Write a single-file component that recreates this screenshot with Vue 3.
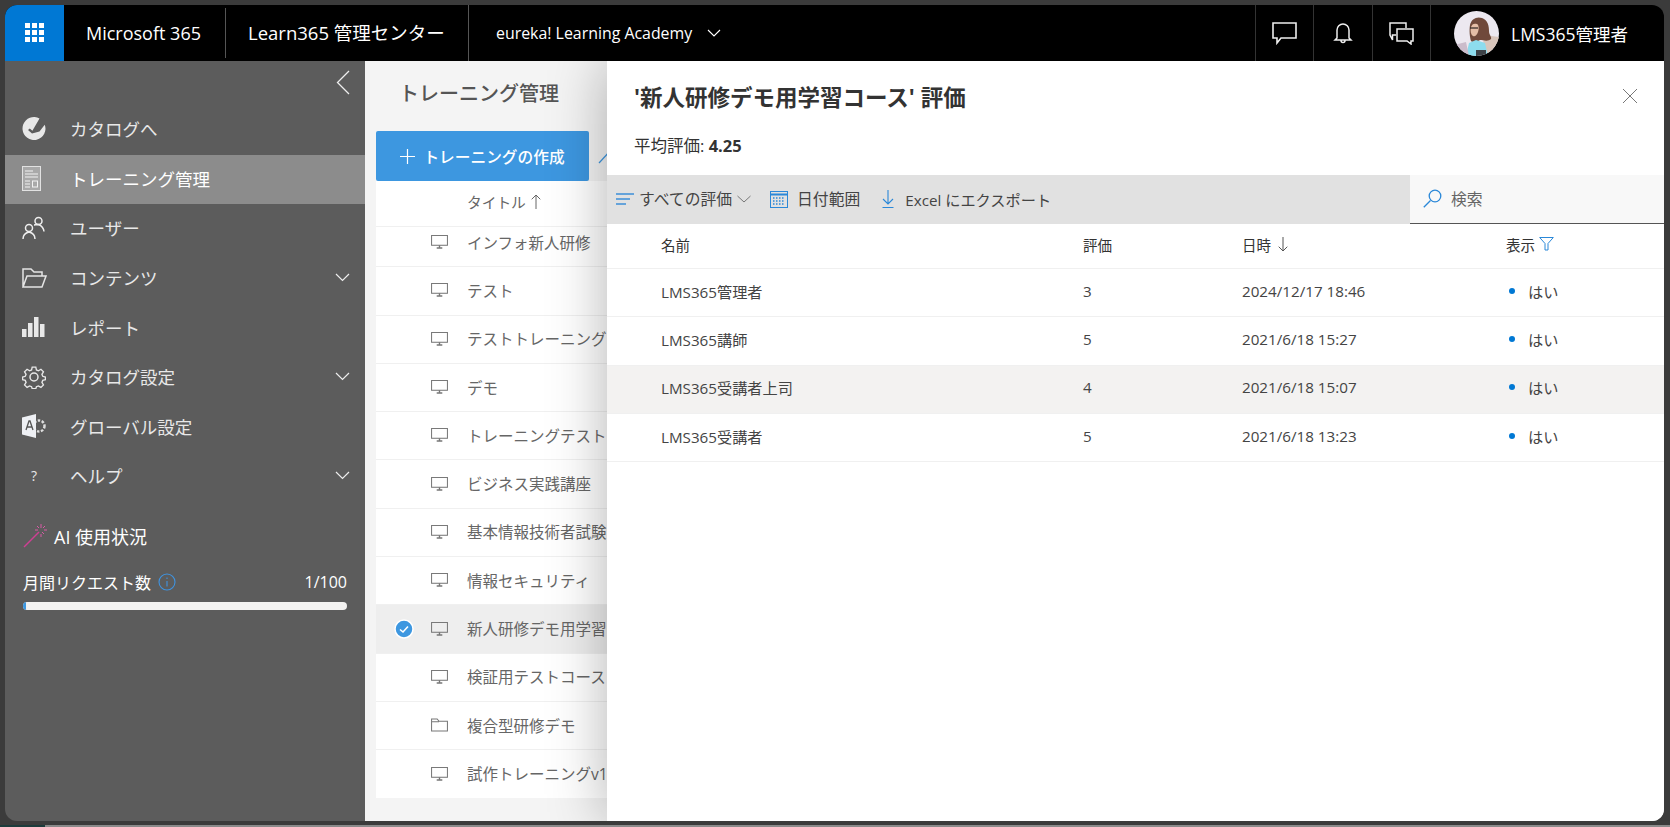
<script setup>
const navItems = [
  { label: 'カタログへ', icon: 'catalog' },
  { label: 'トレーニング管理', icon: 'training', active: true },
  { label: 'ユーザー', icon: 'users' },
  { label: 'コンテンツ', icon: 'folder', more: true },
  { label: 'レポート', icon: 'report' },
  { label: 'カタログ設定', icon: 'gear', more: true },
  { label: 'グローバル設定', icon: 'global' },
  { label: 'ヘルプ', icon: 'help', more: true }
]

const courses = [
  { title: 'インフォ新人研修' },
  { title: 'テスト' },
  { title: 'テストトレーニング' },
  { title: 'デモ' },
  { title: 'トレーニングテスト' },
  { title: 'ビジネス実践講座' },
  { title: '基本情報技術者試験' },
  { title: '情報セキュリティ' },
  { title: '新人研修デモ用学習コース', selected: true },
  { title: '検証用テストコース' },
  { title: '複合型研修デモ', folder: true },
  { title: '試作トレーニングv1' }
]

const ratings = [
  { name: 'LMS365管理者', score: 3, date: '2024/12/17 18:46' },
  { name: 'LMS365講師', score: 5, date: '2021/6/18 15:27' },
  { name: 'LMS365受講者上司', score: 4, date: '2021/6/18 15:07', hover: true },
  { name: 'LMS365受講者', score: 5, date: '2021/6/18 13:23' }
]
</script>

<template>
  <div class="screen">
    <div class="window">
      <header class="topbar">
        <div class="waffle">
          <svg width="20" height="20" viewBox="0 0 20 20" fill="#fff">
            <rect x="0" y="0" width="5" height="5" /><rect x="7" y="0" width="5" height="5" /><rect x="14" y="0" width="5" height="5" />
            <rect x="0" y="7" width="5" height="5" /><rect x="7" y="7" width="5" height="5" /><rect x="14" y="7" width="5" height="5" />
            <rect x="0" y="14" width="5" height="5" /><rect x="7" y="14" width="5" height="5" /><rect x="14" y="14" width="5" height="5" />
          </svg>
        </div>
        <div class="brand">Microsoft 365</div>
        <div class="appname">Learn365 管理センター</div>
        <div class="tenant">
          eureka! Learning Academy
          <svg width="14" height="8" viewBox="0 0 14 8" fill="none" stroke="#fff" stroke-width="1.1"><path d="M1 1l6 6 6-6" /></svg>
        </div>
        <div class="top-actions">
          <div class="top-btn">
            <svg width="25" height="24" viewBox="0 0 25 24" fill="none" stroke="#eee" stroke-width="1.6"><path d="M1 2h23v15H9l-4 5v-5H1z" /></svg>
          </div>
          <div class="top-btn">
            <svg width="20" height="24" viewBox="0 0 20 24" fill="none" stroke="#eee" stroke-width="1.5"><path d="M4 17V9a6 6 0 0112 0v8l2 2H2zM8 19.500a2 2 0 004 0" /></svg>
          </div>
          <div class="top-btn">
            <svg width="25" height="24" viewBox="0 0 25 24" fill="none" stroke="#eee" stroke-width="1.5"><path d="M7 14H3.500v5L1 14V2h16v5M8 8h16v12h-2v3l-4-3H8z" /></svg>
          </div>
          <div class="user">
            <svg class="avatar" width="45" height="45" viewBox="0 0 45 45">
              <defs>
                <clipPath id="avatarClip"><circle cx="22.500" cy="22.500" r="22.500" /></clipPath>
                <filter id="avatarBlur"><feGaussianBlur stdDeviation="0.7" /></filter>
              </defs>
              <g clip-path="url(#avatarClip)">
                <rect width="45" height="45" fill="#ece8f0" />
                <g filter="url(#avatarBlur)">
                  <path d="M30 24l15 2v19H28z" fill="#d9c6bc" />
                  <path d="M16 14c1-6 7-9 12-7 6 2 7 8 7 13 0 4 3 6 2 8-3 3-8 1-11 1-3 2-7 3-9 1-1-3-2-10-1-16z" fill="#6f4a3a" />
                  <path d="M17 16c1-3 3-4 6-3 2 1 2 5 1 8-1 3-3 5-5 4-2-1-3-5-2-9z" fill="#e4bda6" />
                  <path d="M16 17h8" stroke="#2c2320" stroke-width="1.200" />
                  <path d="M12 45l3-13 7-3 9 3 3 13z" fill="#8ddcee" />
                  <path d="M0 34l12-3 3 14H0z" fill="#cbbccb" />
                  <path d="M22 39h10v6H22z" fill="#3d4247" />
                </g>
              </g>
            </svg>
            <span>LMS365管理者</span>
          </div>
        </div>
      </header>

      <div class="body">
        <aside class="sidebar">
          <div class="collapse">
            <svg width="14" height="25" viewBox="0 0 14 25" fill="none" stroke="#eee" stroke-width="1.3"><path d="M13 1L1.500 12.500 13 24" /></svg>
          </div>
          <nav>
            <div v-for="item in navItems" :key="item.label" class="nav-item" :class="{ active: item.active }">
              <span class="nav-icon">
                <svg v-if="item.icon === 'catalog'" width="24" height="24" viewBox="0 0 24 24">
                  <path d="M17.500 1.400A11.500 11.500 0 1023.500 12c0-1.500-.3-3-.8-4.300L17.500 14.500 10 16.500l-4-3.500 1.800-1.500 2.600 2.200z" fill="#e8e8e8" />
                </svg>
                <svg v-else-if="item.icon === 'training'" width="19" height="25" viewBox="0 0 19 25" fill="none">
                  <rect x=".5" y=".5" width="18" height="24" fill="#a9a9a9" stroke="#e2e2e2" />
                  <path d="M3 5h8M3 8h13M3 11h13M3 15h5M3 18h5M3 21h5" stroke="#f2f2f2" />
                  <rect x="10.500" y="15" width="5" height="6" stroke="#f2f2f2" />
                </svg>
                <svg v-else-if="item.icon === 'users'" width="24" height="24" viewBox="0 0 24 24" fill="none" stroke="#eee" stroke-width="1.500">
                  <circle cx="16.500" cy="5" r="3.500" /><circle cx="7" cy="12" r="3.500" />
                  <path d="M1 23c0-3 2-6 6-7 4 1 6 4 6 7M12 9c1 0 2-.5 4.500-.5 2.500 1 5 3 5.500 7" />
                </svg>
                <svg v-else-if="item.icon === 'folder'" width="25" height="22" viewBox="0 0 25 22" fill="none" stroke="#e4e4e4" stroke-width="1.500">
                  <path d="M1 20V2h8l3 3h8v4M1 20l4-11h19l-4 11z" />
                </svg>
                <svg v-else-if="item.icon === 'report'" width="23" height="20" viewBox="0 0 23 20" fill="#e8e8e8">
                  <rect x="0" y="12" width="4.500" height="8" /><rect x="6" y="6" width="4.500" height="14" />
                  <rect x="12" y="0" width="4.500" height="20" /><rect x="18" y="7" width="4.500" height="13" />
                </svg>
                <svg v-else-if="item.icon === 'gear'" width="24" height="24" viewBox="0 0 24 24" fill="none" stroke="#e8e8e8" stroke-width="1.500">
                  <circle cx="12" cy="12" r="4" />
                  <path d="M10 1h4l.7 3.200 2.200.9L19.700 3.400l2.800 2.800-1.700 2.800.9 2.200 3 .8v3l-3 .8-.9 2.200 1.700 2.800-2.800 2.800-2.800-1.700-2.200.9-.7 2.200h-4l-.7-2.200-2.200-.9-2.800 1.700-2.800-2.800 1.700-2.800-.9-2.200-3-.8v-3l3-.8.900-2.200-1.700-2.800 2.800-2.800 2.800 1.700 2.200-.9z" transform="translate(1.200 1.200) scale(.9)" />
                </svg>
                <svg v-else-if="item.icon === 'global'" width="24" height="24" viewBox="0 0 24 24">
                  <circle cx="17" cy="12" r="5.500" fill="none" stroke="#ddd" stroke-width="2.500" stroke-dasharray="2.500 1.500" />
                  <path d="M0 3.500L14 0v24L0 20.500z" fill="#eef0f4" />
                  <path d="M4 16l3-9h1l3 9M5 13h5" fill="none" stroke="#555" stroke-width="1.300" />
                </svg>
                <span v-else class="help-mark">?</span>
              </span>
              <span class="nav-label">{{ item.label }}</span>
              <svg v-if="item.more" class="nav-more" width="15" height="9" viewBox="0 0 15 9" fill="none" stroke="#eee" stroke-width="1.200"><path d="M1 1l6.500 6.500L14 1" /></svg>
            </div>
          </nav>
          <div class="usage">
            <div class="usage-title">
              <svg width="25" height="25" viewBox="0 0 25 25" fill="none">
                <path d="M1 24L16 9" stroke="#cf3f93" stroke-width="1.500" />
                <path d="M18 1v4M18 11v3M12 7h3M21 7h3M14 3l2 2M22 3l-2 2M21 11l-2-2" stroke="#d85aa5" stroke-width="1" />
              </svg>
              <span>AI 使用状況</span>
            </div>
            <div class="usage-row">
              <span>月間リクエスト数</span>
              <svg width="18" height="18" viewBox="0 0 18 18" fill="none" stroke="#3f93e0" stroke-width="1.100">
                <circle cx="9" cy="9" r="8" /><path d="M9 8v5.500M9 4.500v1.500" />
              </svg>
              <span class="usage-count">1/100</span>
            </div>
            <div class="usage-bar"><div class="usage-fill" :style="{ width: '1%' }"></div></div>
          </div>
        </aside>

        <main class="content">
          <h1 class="page-title">トレーニング管理</h1>
          <div class="commands">
            <button class="create-btn">
              <svg width="15" height="15" viewBox="0 0 15 15" stroke="#fff" stroke-width="1.200"><path d="M7.500 0v15M0 7.500h15" /></svg>
              トレーニングの作成
            </button>
            <svg class="edit-icon" width="16" height="16" viewBox="0 0 16 16" fill="none" stroke="#3d97e0" stroke-width="1.200"><path d="M1 15L13 2" /></svg>
          </div>
          <div class="list">
            <div class="list-head">
              タイトル
              <svg width="10" height="15" viewBox="0 0 10 15" fill="none" stroke="#666"><path d="M5 15V1M.7 5.300L5 1l4.300 4.300" /></svg>
            </div>
            <div class="list-rows">
              <div v-for="c in courses" :key="c.title" class="list-row" :class="{ selected: c.selected }">
                <span class="check">
                  <svg v-if="c.selected" width="20" height="20" viewBox="0 0 20 20">
                    <circle cx="10" cy="10" r="9" fill="#3d97e0" stroke="#fff" stroke-width="1.500" />
                    <path d="M6 10.500l3 2.500 5-5.500" fill="none" stroke="#fff" stroke-width="1.600" />
                  </svg>
                </span>
                <svg v-if="c.folder" class="row-icon" width="17" height="14" viewBox="0 0 18 15" fill="none" stroke="#777" stroke-width="1.100">
                  <path d="M.5 14V1h6l2 2.500h9V14zM.5 4h8" />
                </svg>
                <svg v-else class="row-icon" width="17" height="14" viewBox="0 0 18 15" fill="none" stroke="#777" stroke-width="1.100">
                  <rect x=".5" y=".5" width="17" height="10.500" /><path d="M9 11v2.500M6 14h6" stroke-width="1.500" />
                </svg>
                <span class="row-title">{{ c.title }}</span>
              </div>
            </div>
          </div>

          <section class="panel">
            <div class="panel-head">
              <h2>'新人研修デモ用学習コース' 評価</h2>
              <svg width="14" height="14" viewBox="0 0 14 14" stroke="#777" stroke-width="1"><path d="M0 0l14 14M14 0L0 14" /></svg>
            </div>
            <p class="average">平均評価: <strong>4.25</strong></p>
            <div class="toolbar">
              <div class="tools">
                <div class="tool first">
                  <svg width="18" height="12" viewBox="0 0 18 12" stroke="#3d8fd8" stroke-width="1.300"><path d="M0 1h18M0 6h14M0 11h10" /></svg>
                  <span>すべての評価</span>
                  <svg width="14" height="8" viewBox="0 0 14 8" fill="none" stroke="#777"><path d="M.5 1l6.500 6 6.500-6" /></svg>
                </div>
                <div class="tool date">
                  <svg width="18" height="18" viewBox="0 0 18 18" fill="none" stroke="#2b88d8">
                    <rect x=".5" y="1.500" width="17" height="16" /><path d="M0 4.500h18" stroke-width="2" />
                    <path d="M3 8h12M3 11h12M3 14h12" stroke-dasharray="1.500 1.500" stroke-width="1.300" />
                  </svg>
                  <span>日付範囲</span>
                </div>
                <div class="tool export">
                  <svg width="12" height="18" viewBox="0 0 12 18" fill="none" stroke="#2b88d8" stroke-width="1.100"><path d="M6 0v14M1 9l5 5 5-5M.5 17.500h11" /></svg>
                  <span class="excel">Excel にエクスポート</span>
                </div>
              </div>
              <div class="search">
                <svg width="19" height="19" viewBox="0 0 19 19" fill="none" stroke="#2b88d8" stroke-width="1.300"><circle cx="12" cy="7" r="5.800" /><path d="M7.500 11.500L.8 18.200" /></svg>
                <span>検索</span>
              </div>
            </div>
            <div class="table">
              <div class="t-row t-head">
                <span>名前</span>
                <span>評価</span>
                <span class="date-head">
                  日時
                  <svg width="10" height="15" viewBox="0 0 10 15" fill="none" stroke="#555"><path d="M5 0v14M.7 9.700L5 14l4.300-4.300" /></svg>
                </span>
                <span class="shown-head">
                  表示
                  <svg width="15" height="14" viewBox="0 0 15 14" fill="none" stroke="#2b88d8"><path d="M.7.500h13.600L9 6.500V13H6V6.500z" /></svg>
                </span>
              </div>
              <div v-for="r in ratings" :key="r.name" class="t-row" :class="{ hover: r.hover }">
                <span>{{ r.name }}</span>
                <span>{{ r.score }}</span>
                <span>{{ r.date }}</span>
                <span class="shown"><i class="dot"></i>はい</span>
              </div>
            </div>
          </section>
        </main>
      </div>
    </div>
    <div class="taskbar"><div class="taskbar-start"></div></div>
  </div>
</template>

<style scoped>
.screen {
  width: 1670px;
  height: 827px;
  background: #3b3b3b;
  padding: 5px 6px 0 5px;
  box-sizing: border-box;
  display: flex;
  flex-direction: column;
  font-family: "Open Sans", "Noto Sans CJK JP", sans-serif;
  position: relative;
}
.window {
  height: 816px;
  border-radius: 12px;
  overflow: hidden;
  display: flex;
  flex-direction: column;
}
.taskbar {
  margin: 4px -6px 0 -5px;
  height: 2px;
  background: #8a8a8a;
}
.taskbar-start {
  width: 45px;
  height: 2px;
  background: #1d3b3b;
}
.topbar {
  height: 56px;
  flex: none;
  background: #000;
  color: #fff;
  display: flex;
  align-items: center;
  font-size: 18px;
}
.waffle {
  width: 59px;
  height: 56px;
  background: #0078d4;
  display: flex;
  align-items: center;
  justify-content: center;
}
.brand {
  width: 162px;
  padding-left: 22px;
  height: 50px;
  box-sizing: border-box;
  line-height: 50px;
  border-right: 1px solid #555;
}
.appname {
  width: 243px;
  padding-left: 22px;
  height: 56px;
  line-height: 56px;
  box-sizing: border-box;
  border-right: 1px solid #555;
  font-size: 18.500px;
}
.tenant {
  padding-left: 27px;
  font-size: 15.900px;
  display: flex;
  align-items: center;
  gap: 15px;
}
.top-actions {
  margin-left: auto;
  display: flex;
  align-items: center;
  height: 56px;
}
.top-btn {
  width: 57.500px;
  height: 56px;
  border-left: 1px solid #333;
  display: flex;
  align-items: center;
  justify-content: center;
}
.user {
  width: 234px;
  height: 56px;
  box-sizing: border-box;
  border-left: 1px solid #333;
  padding-left: 23px;
  display: flex;
  align-items: center;
  gap: 12px;
  font-size: 17.500px;
}
.body {
  flex: 1;
  display: flex;
  min-height: 0;
}
.sidebar {
  width: 360px;
  flex: none;
  background: #5c5c5c;
  color: #e8e8e8;
  display: flex;
  flex-direction: column;
}
.collapse {
  height: 44px;
  display: flex;
  justify-content: flex-end;
  padding: 9px 15px 0 0;
  box-sizing: border-box;
}
.nav-item {
  height: 49.600px;
  box-sizing: border-box;
  padding-bottom: 2px;
  display: flex;
  align-items: center;
  font-size: 17.500px;
}
.nav-item.active {
  background: #8c8c8c;
  color: #fff;
}
.nav-icon {
  width: 65px;
  padding-left: 17px;
  box-sizing: border-box;
  display: flex;
  align-items: center;
  flex: none;
}
.help-mark {
  width: 24px;
  text-align: center;
  font-size: 14px;
}
.nav-more {
  margin-left: auto;
  margin-right: 15px;
}
.usage {
  padding: 21px 18px 0 18px;
}
.usage-title {
  display: flex;
  align-items: center;
  gap: 6px;
  font-size: 18px;
  color: #fff;
}
.usage-row {
  display: flex;
  align-items: center;
  gap: 7px;
  margin-top: 21px;
  font-size: 16px;
  color: #fff;
}
.usage-count {
  margin-left: auto;
}
.usage-bar {
  margin-top: 8px;
  height: 8px;
  border-radius: 4px;
  background: #f3f2f1;
  overflow: hidden;
}
.usage-fill {
  height: 100%;
  background: #3d97e0;
  min-width: 3px;
}
.content {
  flex: 1;
  background: #f4f4f4;
  position: relative;
  min-width: 0;
  overflow: hidden;
}
.page-title {
  margin: 0;
  padding: 17px 0 0 34px;
  height: 70px;
  box-sizing: border-box;
  font-size: 20px;
  font-weight: 500;
  color: #555;
}
.commands {
  display: flex;
  align-items: center;
  margin-left: 11px;
  height: 50px;
}
.create-btn {
  width: 213px;
  height: 50px;
  background: #3d97e0;
  border: none;
  border-radius: 2px;
  color: #fff;
  font: inherit;
  font-size: 15.700px;
  font-weight: 500;
  display: flex;
  align-items: center;
  justify-content: center;
  gap: 8px;
}
.edit-icon {
  margin-left: 9px;
}
.list {
  margin-left: 11px;
  background: #fff;
  color: #666;
  font-size: 15.500px;
}
.list-head {
  height: 46px;
  padding: 0 0 4px 91px;
  box-sizing: border-box;
  border-bottom: 1px solid #f0f0f0;
  font-size: 14.700px;
  display: flex;
  align-items: center;
  gap: 5px;
}
.list-rows {
  height: 571px;
  overflow: hidden;
}
.list-rows .list-row:first-child {
  margin-top: -8px;
}
.list-row {
  height: 48.300px;
  box-sizing: border-box;
  display: flex;
  align-items: center;
  border-bottom: 1px solid #f0f0f0;
  padding-bottom: 1px;
  white-space: nowrap;
}
.list-row:last-child {
  border-bottom: none;
}
.list-row.selected {
  background: #eee;
}
.check {
  width: 55px;
  padding-left: 18px;
  box-sizing: border-box;
  flex: none;
  display: flex;
}
.row-title {
  margin-left: 19px;
}
.row-icon {
  flex: none;
}
.panel {
  position: absolute;
  top: 0;
  right: 0;
  bottom: 0;
  width: 1057px;
  background: #fff;
  box-shadow: 0 0 55px rgba(0, 0, 0, 0.3);
  color: #333;
}
.panel-head {
  display: flex;
  justify-content: space-between;
  align-items: center;
  padding: 20px 27px 0 27px;
  height: 50px;
  box-sizing: border-box;
}
.panel-head h2 {
  margin: 0;
  font-size: 22.500px;
  font-weight: 700;
  color: #333;
}
.average {
  margin: 0;
  padding: 24px 0 0 27px;
  height: 64px;
  box-sizing: border-box;
  font-size: 16.500px;
  line-height: 22px;
}
.toolbar {
  height: 49px;
  display: flex;
  background: #e1e1e1;
  font-size: 15.800px;
  color: #444;
}
.tools {
  flex: 1;
  display: flex;
  align-items: center;
  padding: 0 0 2px 9px;
}
.tool {
  display: flex;
  align-items: center;
  gap: 5px;
}
.date {
  margin-left: 19px;
  gap: 9px;
}
.export {
  margin-left: 22px;
  gap: 11px;
}
.excel {
  font-size: 15.200px;
}
.search {
  width: 254px;
  box-sizing: border-box;
  background: #f8f8f8;
  border-bottom: 1px solid #555;
  display: flex;
  align-items: center;
  gap: 9px;
  padding: 0 0 2px 13px;
  color: #666;
}
.t-row {
  height: 48.300px;
  box-sizing: border-box;
  display: grid;
  grid-template-columns: 422px 159px 264px 1fr;
  align-items: center;
  padding: 0 0 4px 54px;
  border-bottom: 1px solid #f0f0f0;
  font-size: 15.200px;
  color: #444;
}
.t-row.hover {
  background: #f3f2f1;
}
.t-head {
  height: 45px;
  font-size: 14.500px;
  color: #333;
}
.date-head {
  display: flex;
  align-items: center;
  gap: 7px;
}
.shown-head {
  display: flex;
  align-items: center;
  gap: 4px;
}
.shown {
  display: flex;
  align-items: center;
  padding-left: 3px;
}
.dot {
  width: 6px;
  height: 6px;
  border-radius: 50%;
  background: #0078d4;
  margin-right: 13px;
}
</style>

<style>
html, body {
  margin: 0;
  overflow: hidden;
}
</style>
